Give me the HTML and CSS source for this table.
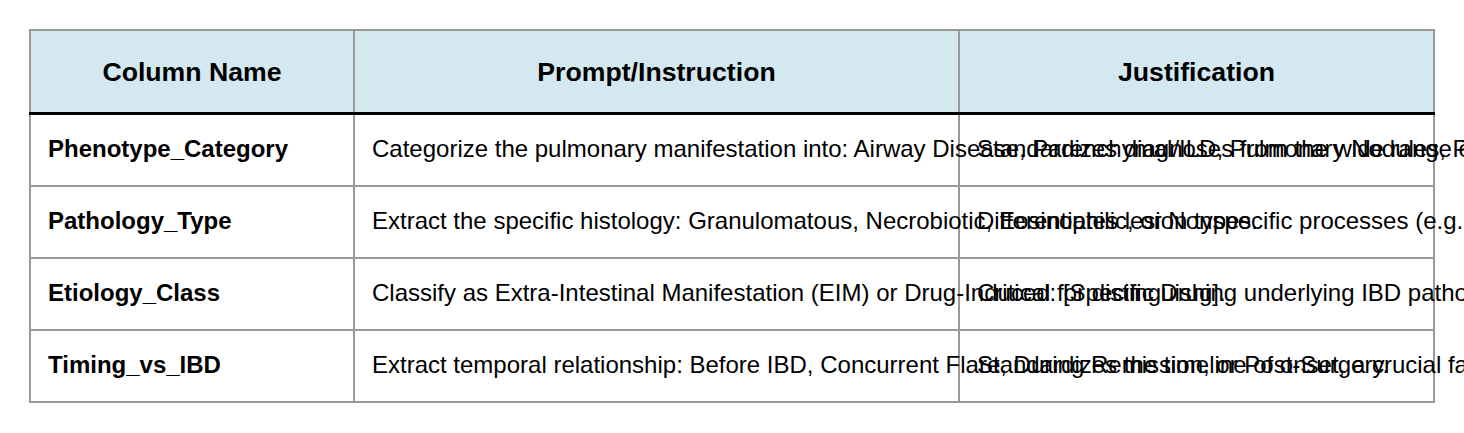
FILE: index.html
```html
<!DOCTYPE html>
<html>
<head>
<meta charset="utf-8">
<link rel="stylesheet" href="styles.css">
</head>
<body>
<table class="grid">
  <colgroup>
    <col class="c1">
    <col class="c2">
    <col class="c3">
  </colgroup>
  <thead>
    <tr>
      <th>Column Name</th>
      <th>Prompt/Instruction</th>
      <th>Justification</th>
    </tr>
  </thead>
  <tbody>
    <tr>
      <td class="name">Phenotype_Category</td>
      <td>Categorize the pulmonary manifestation into: Airway Disease, Parenchymal/ILD, Pulmonary Nodules, Pleural Disease, or Vasculitis.</td>
      <td>Standardizes diagnoses from the wide range of reported findings.</td>
    </tr>
    <tr>
      <td class="name">Pathology_Type</td>
      <td>Extract the specific histology: Granulomatous, Necrobiotic, Eosinophilic, or Nonspecific processes (e.g., necrotizing granulomas).</td>
      <td>Differentiates lesion types.</td>
    </tr>
    <tr>
      <td class="name">Etiology_Class</td>
      <td>Classify as Extra-Intestinal Manifestation (EIM) or Drug-Induced: [Specific Drug].</td>
      <td>Critical for distinguishing underlying IBD pathology from drug toxicity.</td>
    </tr>
    <tr>
      <td class="name">Timing_vs_IBD</td>
      <td>Extract temporal relationship: Before IBD, Concurrent Flare, During Remission, or Post-Surgery.</td>
      <td>Standardizes the timeline of onset, a crucial factor in diagnosis.</td>
    </tr>
  </tbody>
</table>
</body>
</html>
```

FILE: styles.css
```css
html, body {
  margin: 0;
  padding: 0;
  background: #ffffff;
}
body {
  padding: 29px 0 0 29px;
  font-family: "Liberation Sans", Arial, sans-serif;
  color: #000000;
}
.grid {
  border-collapse: collapse;
  table-layout: fixed;
  width: 1404px;
}
.c1 { width: 324px; }
.c2 { width: 605px; }
.c3 { width: 475px; }
.grid th,
.grid td {
  border: 2px solid #999999;
  white-space: nowrap;
  overflow: visible;
  vertical-align: middle;
}
.grid th {
  background: #d4e8ef;
  font-size: 26.67px;
  font-weight: bold;
  text-align: center;
  height: 80px;
  padding: 1px 17px 0;
  border-bottom: 3px solid #000000;
}
.grid td {
  font-size: 24px;
  text-align: left;
  height: 68px;
  padding: 0 17px 2px;
}
.grid td.name {
  font-weight: bold;
}
```
